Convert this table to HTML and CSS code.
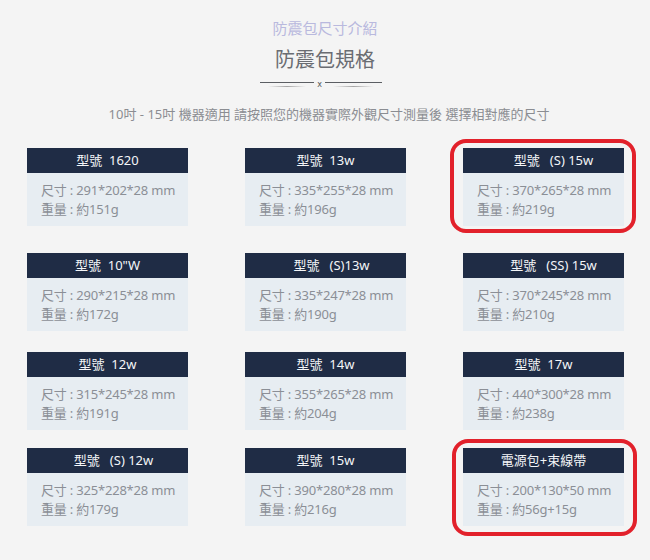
FILE: index.html
```html
<!DOCTYPE html>
<html lang="zh-Hant">
<head>
<meta charset="utf-8">
<title>防震包規格</title>
<link rel="stylesheet" href="styles.css">
</head>
<body>
<div class="page">
  <header class="intro">
    <p class="eyebrow">防震包尺寸介紹</p>
    <h1 class="title">防震包規格</h1>
    <div class="divider"><span class="line"></span><span class="mark">x</span><span class="line"></span></div>
    <p class="subtitle">10吋 - 15吋 機器適用 請按照您的機器實際外觀尺寸測量後 選擇相對應的尺寸</p>
  </header>

  <div class="grid">
    <div class="row row-1">
      <div class="card"><div class="card-head">型號&nbsp; 1620</div><div class="card-body"><p>尺寸 : 291*202*28 mm</p><p>重量 : 約151g</p></div></div>
      <div class="card"><div class="card-head">型號&nbsp; 13w</div><div class="card-body"><p>尺寸 : 335*255*28 mm</p><p>重量 : 約196g</p></div></div>
      <div class="card card-marked mark-a"><div class="card-head shift">型號&nbsp;&nbsp; (S) 15w</div><div class="card-body"><p>尺寸 : 370*265*28 mm</p><p>重量 : 約219g</p></div></div>
    </div>
    <div class="row row-2">
      <div class="card"><div class="card-head">型號&nbsp; 10"W</div><div class="card-body"><p>尺寸 : 290*215*28 mm</p><p>重量 : 約172g</p></div></div>
      <div class="card"><div class="card-head shift-s">型號&nbsp;&nbsp; (S)13w</div><div class="card-body"><p>尺寸 : 335*247*28 mm</p><p>重量 : 約190g</p></div></div>
      <div class="card"><div class="card-head shift">型號&nbsp;&nbsp; (SS) 15w</div><div class="card-body"><p>尺寸 : 370*245*28 mm</p><p>重量 : 約210g</p></div></div>
    </div>
    <div class="row row-3">
      <div class="card"><div class="card-head">型號&nbsp; 12w</div><div class="card-body"><p>尺寸 : 315*245*28 mm</p><p>重量 : 約191g</p></div></div>
      <div class="card"><div class="card-head">型號&nbsp; 14w</div><div class="card-body"><p>尺寸 : 355*265*28 mm</p><p>重量 : 約204g</p></div></div>
      <div class="card"><div class="card-head">型號&nbsp; 17w</div><div class="card-body"><p>尺寸 : 440*300*28 mm</p><p>重量 : 約238g</p></div></div>
    </div>
    <div class="row row-4">
      <div class="card"><div class="card-head shift-s">型號&nbsp;&nbsp; (S) 12w</div><div class="card-body"><p>尺寸 : 325*228*28 mm</p><p>重量 : 約179g</p></div></div>
      <div class="card"><div class="card-head">型號&nbsp; 15w</div><div class="card-body"><p>尺寸 : 390*280*28 mm</p><p>重量 : 約216g</p></div></div>
      <div class="card card-marked mark-b"><div class="card-head">電源包+束線帶</div><div class="card-body"><p>尺寸 : 200*130*50 mm</p><p>重量 : 約56g+15g</p></div></div>
    </div>
  </div>
</div>
</body>
</html>
```

FILE: styles.css
```css
* { box-sizing: border-box; }

html, body {
  margin: 0;
  padding: 0;
  background: #f4f4f4;
}

body {
  font-family: "Noto Sans", "Noto Sans CJK TC", sans-serif;
  width: 650px;
  height: 560px;
  overflow: hidden;
}

.page {
  padding-top: 17px;
}

.intro {
  display: flex;
  flex-direction: column;
  align-items: center;
}

.eyebrow {
  margin: 0;
  font-size: 15px;
  line-height: 22px;
  color: #b9b9de;
  font-family: "Noto Sans CJK TC", sans-serif;
}

.title {
  margin: 6px 0 0;
  font-size: 20px;
  font-weight: 400;
  line-height: 28px;
  color: #6a6c72;
  font-family: "Noto Sans CJK TC", sans-serif;
}

.divider {
  margin-top: 5px;
  display: flex;
  align-items: center;
  gap: 3px;
  margin-right: 8px;
  height: 12px;
}

.divider .line {
  width: 54px;
  height: 5px;
  border-top: 1px solid #5b5e63;
  position: relative;
}
.divider .line::after {
  content: "";
  position: absolute;
  left: 8px;
  right: 8px;
  top: 3px;
  height: 1px;
  background: linear-gradient(90deg, rgba(150,150,150,0), rgba(130,130,130,.7), rgba(150,150,150,0));
}
.divider .line:last-child { width: 57px; }

.divider .mark {
  font-size: 8px;
  line-height: 8px;
  color: #555;
  font-family: "DejaVu Sans", sans-serif;
  margin-top: 2px;
}

.subtitle {
  margin: 15px 0 0;
  font-size: 13px;
  line-height: 18px;
  color: #8b8d92;
  font-family: "Noto Sans", "Noto Sans CJK TC", sans-serif;
  padding-left: 8px;
}

.grid {
  padding-left: 27px;
  margin-top: 25px;
}

.row {
  display: flex;
  gap: 57px;
}

.row-2 { margin-top: 27px; }
.row-3 { margin-top: 21px; }
.row-4 { margin-top: 18px; }

.card {
  width: 161px;
  position: relative;
}

.card-head {
  height: 25px;
  background: #1f2c45;
  color: #f4f6f8;
  font-size: 13px;
  line-height: 25px;
  text-align: center;
  white-space: pre;
  font-family: "Noto Sans", "Noto Sans CJK TC", sans-serif;
}
.card-head.shift { padding-left: 20px; }
.card-head.shift-s { padding-left: 12px; }

.card-body {
  background: #e7edf2;
  height: 53px;
  padding: 8px 0 0 14px;
}

.card-body p {
  margin: 0;
  font-size: 13px;
  line-height: 19px;
  color: #8b8f96;
  font-family: "Noto Sans", "Noto Sans CJK TC", sans-serif;
  white-space: nowrap;
  letter-spacing: -0.2px;
}

.card-marked::after {
  content: "";
  position: absolute;
  border: 4px solid #e2212b;
  border-radius: 16px;
  pointer-events: none;
}
.mark-a::after { top: -9px; right: -12px; bottom: -7px; left: -13px; }
.mark-b::after { top: -9px; right: -13px; bottom: -10px; left: -11px; }
```
